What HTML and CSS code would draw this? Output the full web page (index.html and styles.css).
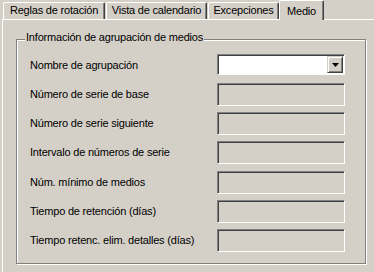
FILE: index.html
```html
<!DOCTYPE html>
<html lang="es">
<head>
<meta charset="utf-8">
<title>Medio</title>
<link rel="stylesheet" href="styles.css">
</head>
<body>
<div class="tabs">
  <div class="tab tab-1">Reglas de rotación</div>
  <div class="tab tab-2">Vista de calendario</div>
  <div class="tab tab-3">Excepciones</div>
  <div class="tab tab-sel">Medio</div>
</div>
<div class="panel">
  <div class="group">
    <div class="legend">Información de agrupación de medios</div>
    <div class="rows">
      <div class="row">
        <div class="label">Nombre de agrupación</div>
        <div class="combo">
          <div class="combo-btn">
            <svg width="7" height="4" viewBox="0 0 7 4"><polygon points="0,0 7,0 3.5,4" fill="#000"/></svg>
          </div>
        </div>
      </div>
      <div class="row">
        <div class="label">Número de serie de base</div>
        <div class="field"></div>
      </div>
      <div class="row">
        <div class="label">Número de serie siguiente</div>
        <div class="field"></div>
      </div>
      <div class="row">
        <div class="label">Intervalo de números de serie</div>
        <div class="field"></div>
      </div>
      <div class="row row-shift">
        <div class="label">Núm. mínimo de medios</div>
        <div class="field"></div>
      </div>
      <div class="row">
        <div class="label">Tiempo de retención (días)</div>
        <div class="field"></div>
      </div>
      <div class="row">
        <div class="label">Tiempo retenc. elim. detalles (días)</div>
        <div class="field"></div>
      </div>
    </div>
  </div>
</div>
</body>
</html>
```
FILE: styles.css
```css
html, body {
  margin: 0;
  padding: 0;
}
body {
  width: 374px;
  height: 272px;
  overflow: hidden;
  background: #d4d0c8;
  font-family: "Liberation Sans", Arial, sans-serif;
  font-size: 11px;
  letter-spacing: -0.2px;
  color: #000;
}
.tabs {
  display: flex;
  align-items: flex-end;
  height: 19px;
  padding-left: 3px;
}
.tab {
  box-sizing: border-box;
  height: 17px;
  margin-right: 1px;
  border-top: 1px solid #fff;
  border-left: 1px solid #fff;
  border-right: 1px solid #404040;
  border-top-left-radius: 2px;
  border-top-right-radius: 2px;
  box-shadow: inset -1px 0 0 #808080;
  background: #d4d0c8;
  line-height: 15px;
  text-align: center;
  white-space: nowrap;
}
.tab-1 { width: 102px; }
.tab-2 { width: 101px; }
.tab-3 { width: 71px; margin-right: 0; }
.tab-sel {
  position: relative;
  z-index: 1;
  width: 45px;
  height: 20px;
  margin-bottom: -1px;
  padding-top: 3px;
}
.panel {
  box-sizing: border-box;
  margin-left: 2px;
  width: 372px;
  height: 253px;
  border-top: 1px solid #fff;
  border-left: 1px solid #fff;
  padding: 19px 0 0 13px;
}
.group {
  position: relative;
  box-sizing: border-box;
  width: 350px;
  height: 225px;
  border: 1px solid #808080;
  box-shadow: inset 1px 1px 0 #fff, 1px 1px 0 #fff;
  padding: 14px 0 0 13px;
}
.legend {
  position: absolute;
  top: -9px;
  left: 8px;
  padding: 0 1px;
  line-height: 13px;
  background: #d4d0c8;
  white-space: nowrap;
}
.rows {
  display: flex;
  flex-direction: column;
  gap: 6px;
}
.row {
  display: flex;
  align-items: center;
  height: 23px;
}
.row-shift {
  margin-top: 1px;
}
.label {
  width: 187px;
  line-height: 13px;
  white-space: nowrap;
}
.field, .combo {
  box-sizing: border-box;
  width: 128px;
  height: 23px;
  border: 1px solid;
  border-color: #808080 #fff #fff #808080;
  box-shadow: inset 1px 1px 0 #404040;
}
.combo {
  align-self: flex-start;
  height: 21px;
  background: #fff;
  padding: 1px;
  display: flex;
  justify-content: flex-end;
}
.combo-btn {
  box-sizing: border-box;
  width: 16px;
  height: 17px;
  background: #d4d0c8;
  border: 1px solid;
  border-color: #d4d0c8 #404040 #404040 #d4d0c8;
  box-shadow: inset 1px 1px 0 #fff, inset -1px -1px 0 #808080;
  display: flex;
  align-items: center;
  justify-content: center;
}
.combo-btn svg {
  display: block;
  margin-top: 1px;
}
```
